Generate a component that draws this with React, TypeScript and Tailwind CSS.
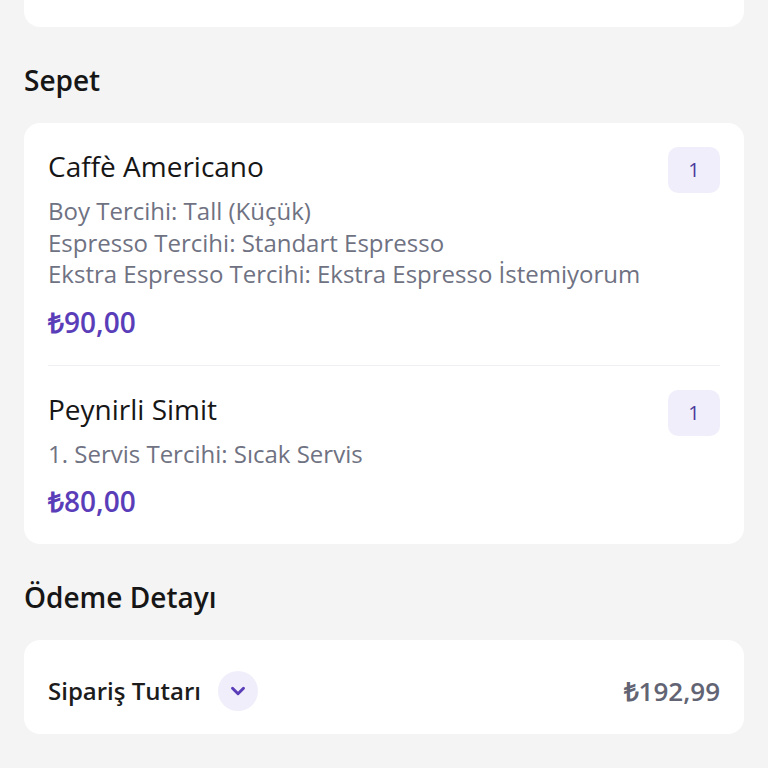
import { ChevronDown } from 'lucide-react';

type CartItem = {
    name: string;
    options: string[];
    price: string;
    qty: number;
};

const items: CartItem[] = [
    {
        name: 'Caffè Americano',
        options: [
            'Boy Tercihi: Tall (Küçük)',
            'Espresso Tercihi: Standart Espresso',
            'Ekstra Espresso Tercihi: Ekstra Espresso İstemiyorum',
        ],
        price: '₺90,00',
        qty: 1,
    },
    {
        name: 'Peynirli Simit',
        options: ['1. Servis Tercihi: Sıcak Servis'],
        price: '₺80,00',
        qty: 1,
    },
];

function CartRow({ item, last }: { item: CartItem; last: boolean }) {
    return (
        <div className={last ? 'pt-[24px]' : 'pb-[24px] border-b border-[#efeff3]'}>
            <div className="flex items-start gap-[24px]">
                <div className="min-w-0 flex-1">
                    <div className="text-[28px] leading-[38px] text-[#161616]">{item.name}</div>
                    <div className="mt-[10px]">
                        {item.options.map((opt) => (
                            <div key={opt} className="truncate text-[24px] leading-[31.5px] text-[#6f7282]">
                                {opt}
                            </div>
                        ))}
                    </div>
                    <div className="mt-[13px] text-[28px] font-semibold leading-[38px] text-[#5a3db8]">{item.price}</div>
                </div>
                <div className="flex h-[46px] w-[52px] shrink-0 items-center justify-center rounded-[10px] bg-[#f0eefb] text-[20px] text-[#4a3a9c]">
                    {item.qty}
                </div>
            </div>
        </div>
    );
}

export default function App() {
    return (
        <div className="min-h-[768px] bg-[#f4f4f4] px-[24px] pb-[40px] font-['Open_Sans',sans-serif]">
            {/* previous section card, cut off at the top */}
            <div className="h-[27px] rounded-b-[16px] bg-white" />

            <h2 className="mt-[35px] mb-[25px] text-[28px] font-semibold leading-[36px] text-[#161616]">Sepet</h2>
            <div className="rounded-[16px] bg-white px-[24px] py-[24px]">
                {items.map((item, i) => (
                    <CartRow key={item.name} item={item} last={i === items.length - 1} />
                ))}
            </div>

            <h2 className="mt-[35px] mb-[25px] text-[28px] font-semibold leading-[36px] text-[#161616]">Ödeme Detayı</h2>
            <div className="rounded-[16px] bg-white px-[24px] pt-[32px] pb-[24px]">
                <div className="flex h-[38px] items-center justify-between">
                    <div className="flex items-center gap-[17px]">
                        <span className="text-[24px] font-semibold text-[#1c1c1c]">Sipariş Tutarı</span>
                        <span className="flex h-[40px] w-[40px] items-center justify-center rounded-full bg-[#f0eefb]">
                            <ChevronDown size={22} strokeWidth={3.2} className="text-[#5a3db8]" />
                        </span>
                    </div>
                    <span className="text-[26px] font-semibold text-[#626473]">₺192,99</span>
                </div>
            </div>
        </div>
    );
}
